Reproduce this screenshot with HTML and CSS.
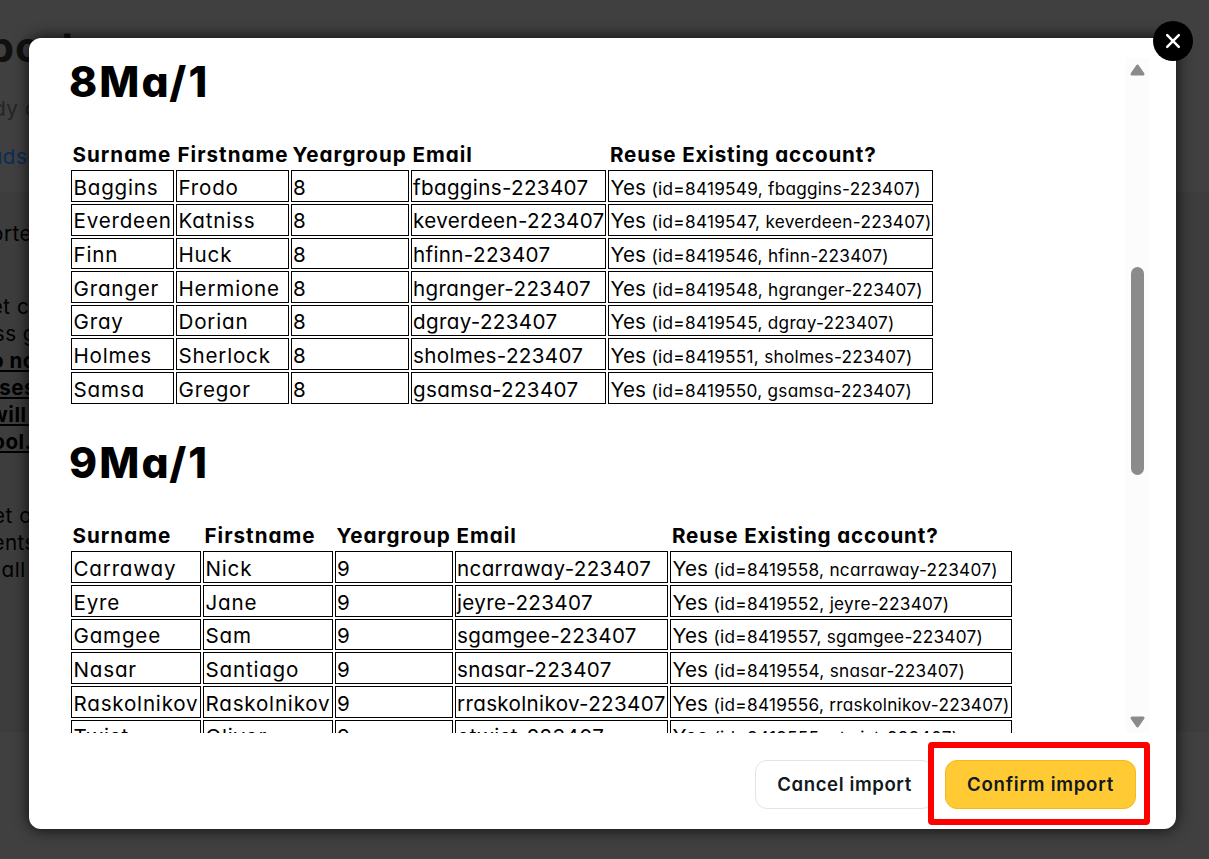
FILE: index.html
```
<!DOCTYPE html>
<html lang="en">
<head>
    <meta charset="UTF-8">
    <meta name="viewport" content="width=device-width, initial-scale=1.0">
    <title>Import classes</title>
    <link rel="stylesheet" href="styles.css">
</head>
<body>
    <div class="page">
        <h1><span>port</span></h1>
        <p class="intro"><span>dy c</span></p>
        <p class="link"><span>adsh</span></p>
        <div class="panel">
            <p><span>orte</span></p>
            <p class="gap wide"><span>et co</span></p>
            <p class="wide"><span>ss g</span></p>
            <p class="strong wide"><span>o no</span></p>
            <p class="strong wide"><span>sses</span></p>
            <p class="strong"><span>will&nbsp;</span></p>
            <p class="strong"><span>ool.</span></p>
            <p class="gap-last"><span>et o</span></p>
            <p class="wide"><span>ents</span></p>
            <p><span>all&nbsp;</span></p>
        </div>
    </div>

    <div class="modal">
        <button class="close" aria-label="Close">
            <svg width="16" height="16" viewBox="0 0 16 16"><path d="M2.2 2.2L13.8 13.8M13.8 2.2L2.2 13.8" stroke="#fff" stroke-width="2.5" stroke-linecap="round"/></svg>
        </button>

        <div class="modal-body">
            <div class="classes">
                <h2>8Ma/1</h2>
                <table class="year8">
                    <colgroup><col><col><col><col><col></colgroup>
                    <tr><th>Surname</th><th>Firstname</th><th>Yeargroup</th><th>Email</th><th>Reuse Existing account?</th></tr>
                    <tr><td>Baggins</td><td>Frodo</td><td>8</td><td>fbaggins-223407</td><td>Yes <small>(id=8419549, fbaggins-223407)</small></td></tr>
                    <tr><td>Everdeen</td><td>Katniss</td><td>8</td><td>keverdeen-223407</td><td>Yes <small>(id=8419547, keverdeen-223407)</small></td></tr>
                    <tr><td>Finn</td><td>Huck</td><td>8</td><td>hfinn-223407</td><td>Yes <small>(id=8419546, hfinn-223407)</small></td></tr>
                    <tr><td>Granger</td><td>Hermione</td><td>8</td><td>hgranger-223407</td><td>Yes <small>(id=8419548, hgranger-223407)</small></td></tr>
                    <tr><td>Gray</td><td>Dorian</td><td>8</td><td>dgray-223407</td><td>Yes <small>(id=8419545, dgray-223407)</small></td></tr>
                    <tr><td>Holmes</td><td>Sherlock</td><td>8</td><td>sholmes-223407</td><td>Yes <small>(id=8419551, sholmes-223407)</small></td></tr>
                    <tr><td>Samsa</td><td>Gregor</td><td>8</td><td>gsamsa-223407</td><td>Yes <small>(id=8419550, gsamsa-223407)</small></td></tr>
                </table>

                <h2>9Ma/1</h2>
                <table class="year9">
                    <colgroup><col><col><col><col><col></colgroup>
                    <tr><th>Surname</th><th>Firstname</th><th>Yeargroup</th><th>Email</th><th>Reuse Existing account?</th></tr>
                    <tr><td>Carraway</td><td>Nick</td><td>9</td><td>ncarraway-223407</td><td>Yes <small>(id=8419558, ncarraway-223407)</small></td></tr>
                    <tr><td>Eyre</td><td>Jane</td><td>9</td><td>jeyre-223407</td><td>Yes <small>(id=8419552, jeyre-223407)</small></td></tr>
                    <tr><td>Gamgee</td><td>Sam</td><td>9</td><td>sgamgee-223407</td><td>Yes <small>(id=8419557, sgamgee-223407)</small></td></tr>
                    <tr><td>Nasar</td><td>Santiago</td><td>9</td><td>snasar-223407</td><td>Yes <small>(id=8419554, snasar-223407)</small></td></tr>
                    <tr><td>Raskolnikov</td><td>Raskolnikov</td><td>9</td><td>rraskolnikov-223407</td><td>Yes <small>(id=8419556, rraskolnikov-223407)</small></td></tr>
                    <tr><td>Twist</td><td>Oliver</td><td>9</td><td>otwist-223407</td><td>Yes <small>(id=8419555, otwist-223407)</small></td></tr>
                </table>
            </div>
            <div class="scrollbar">
                <svg width="15" height="12" viewBox="0 0 15 12"><path d="M7.5 2L13 10H2Z" fill="#8b8b8b" stroke="#8b8b8b" stroke-width="3" stroke-linejoin="round"/></svg>
                <div class="thumb"></div>
                <svg width="15" height="12" viewBox="0 0 15 12"><path d="M7.5 10L13 2H2Z" fill="#8b8b8b" stroke="#8b8b8b" stroke-width="3" stroke-linejoin="round"/></svg>
            </div>
        </div>

        <div class="modal-footer">
            <button class="btn">Cancel import</button>
            <button class="btn btn-confirm">Confirm import</button>
            <div class="highlight"></div>
        </div>
    </div>
</body>
</html>
```
FILE: styles.css
```
* {
    box-sizing: border-box;
}
body {
    margin: 0;
    height: 859px;
    overflow: hidden;
    background-color: #404040;
    font-family: Inter, "Open Sans", sans-serif;
    font-feature-settings: "cv11";
    font-size: 20.6px;
    color: #000;
}
.page {
    height: 859px;
    padding-top: 20px;
    overflow: hidden;
}
.page h1, .page p {
    display: flex;
    justify-content: flex-end;
    width: 32px;
    height: 27px;
    margin: 0;
    line-height: 27px;
    letter-spacing: 0.5px;
    white-space: nowrap;
}
.page h1 {
    width: 77px;
    height: 54px;
    font-size: 42px;
    line-height: 53px;
    letter-spacing: 1px;
    color: #101010;
}
.page .intro {
    width: 37px;
    margin-top: 21px;
    color: #252525;
}
.page .link {
    width: 40px;
    margin-top: 21px;
    color: #0a2c5a;
}
.panel {
    height: 540px;
    margin-top: 22px;
    padding-top: 28px;
    background-color: #3d3d3d;
}
.panel .wide {
    width: 36px;
}
.panel .gap {
    width: 42px;
    margin-top: 46px;
}
.panel .gap-last {
    margin-top: 47px;
}
.panel .strong {
    font-weight: 700;
    text-decoration: underline;
}
.modal {
    position: absolute;
    left: 29px;
    top: 38px;
    width: 1147px;
    height: 791px;
    padding: 20px 27px 20px 40px;
    background-color: #fff;
    border-radius: 12px;
    box-shadow: 0 0 16px rgba(0, 0, 0, 0.85);
}
.close {
    position: absolute;
    top: -17px;
    right: -17px;
    display: flex;
    align-items: center;
    justify-content: center;
    width: 40px;
    height: 40px;
    padding: 0;
    background-color: #000;
    border: none;
    border-radius: 50%;
}
.modal-body {
    display: flex;
    justify-content: space-between;
    height: 675px;
    overflow: hidden;
}
.classes {
    margin-top: -33.5px;
}
h2 {
    height: 111.7px;
    margin: 0;
    padding-top: 30px;
    font-size: 42.5px;
    line-height: 54px;
    font-weight: 800;
    letter-spacing: 2.1px;
}
table {
    table-layout: fixed;
    border-spacing: 2px;
    line-height: 24px;
    white-space: nowrap;
}
.year8 {
    width: 866px;
}
.year9 {
    width: 945px;
}
.year8 col:nth-child(1) { width: 103px; }
.year8 col:nth-child(2) { width: 113px; }
.year8 col:nth-child(3) { width: 118px; }
.year8 col:nth-child(4) { width: 195px; }
.year8 col:nth-child(5) { width: 325px; }
.year9 col:nth-child(1) { width: 130px; }
.year9 col:nth-child(2) { width: 130px; }
.year9 col:nth-child(3) { width: 118px; }
.year9 col:nth-child(4) { width: 213px; }
.year9 col:nth-child(5) { width: 342px; }
th {
    height: 30px;
    padding: 4px 0 0 1.5px;
    text-align: left;
    font-weight: 700;
    letter-spacing: 1px;
}
th:nth-child(5) {
    letter-spacing: 0.85px;
    padding-left: 2px;
}
td {
    height: 31.67px;
    padding: 3.5px 0 0 1.5px;
    border: 1px solid #000;
    letter-spacing: 0.8px;
}
td:nth-child(3) {
    padding-left: 1px;
}
td:nth-child(4) {
    padding-left: 1px;
    letter-spacing: 0.35px;
}
td:nth-child(5) {
    letter-spacing: 0;
}
small {
    font-size: 17.2px;
    line-height: 1;
    letter-spacing: 0.27px;
}
.scrollbar {
    display: flex;
    flex-direction: column;
    align-items: center;
    justify-content: space-between;
    width: 23px;
    padding: 6px 0 5px;
    background-color: #fcfcfc;
}
.thumb {
    width: 13px;
    height: 208px;
    margin-bottom: 51px;
    background-color: #8b8b8b;
    border-radius: 7px;
}
.modal-footer {
    position: relative;
    display: flex;
    justify-content: flex-end;
    gap: 11px;
    padding: 27px 13px 0 0;
}
.btn {
    width: 179px;
    height: 49px;
    padding: 0 0 2px;
    background-color: #fff;
    border: 1px solid #dfe5e5;
    border-radius: 12px;
    font-family: inherit;
    font-feature-settings: inherit;
    font-size: 18.6px;
    font-weight: 600;
    letter-spacing: 0.6px;
    color: #101820;
}
.btn-confirm {
    width: 191px;
    background-color: #ffca34;
    border-color: #f5b820;
    letter-spacing: 0.75px;
}
.highlight {
    position: absolute;
    top: 9px;
    right: -1px;
    width: 222px;
    height: 83px;
    border: 6px solid #f00;
    border-radius: 4px;
}
```
